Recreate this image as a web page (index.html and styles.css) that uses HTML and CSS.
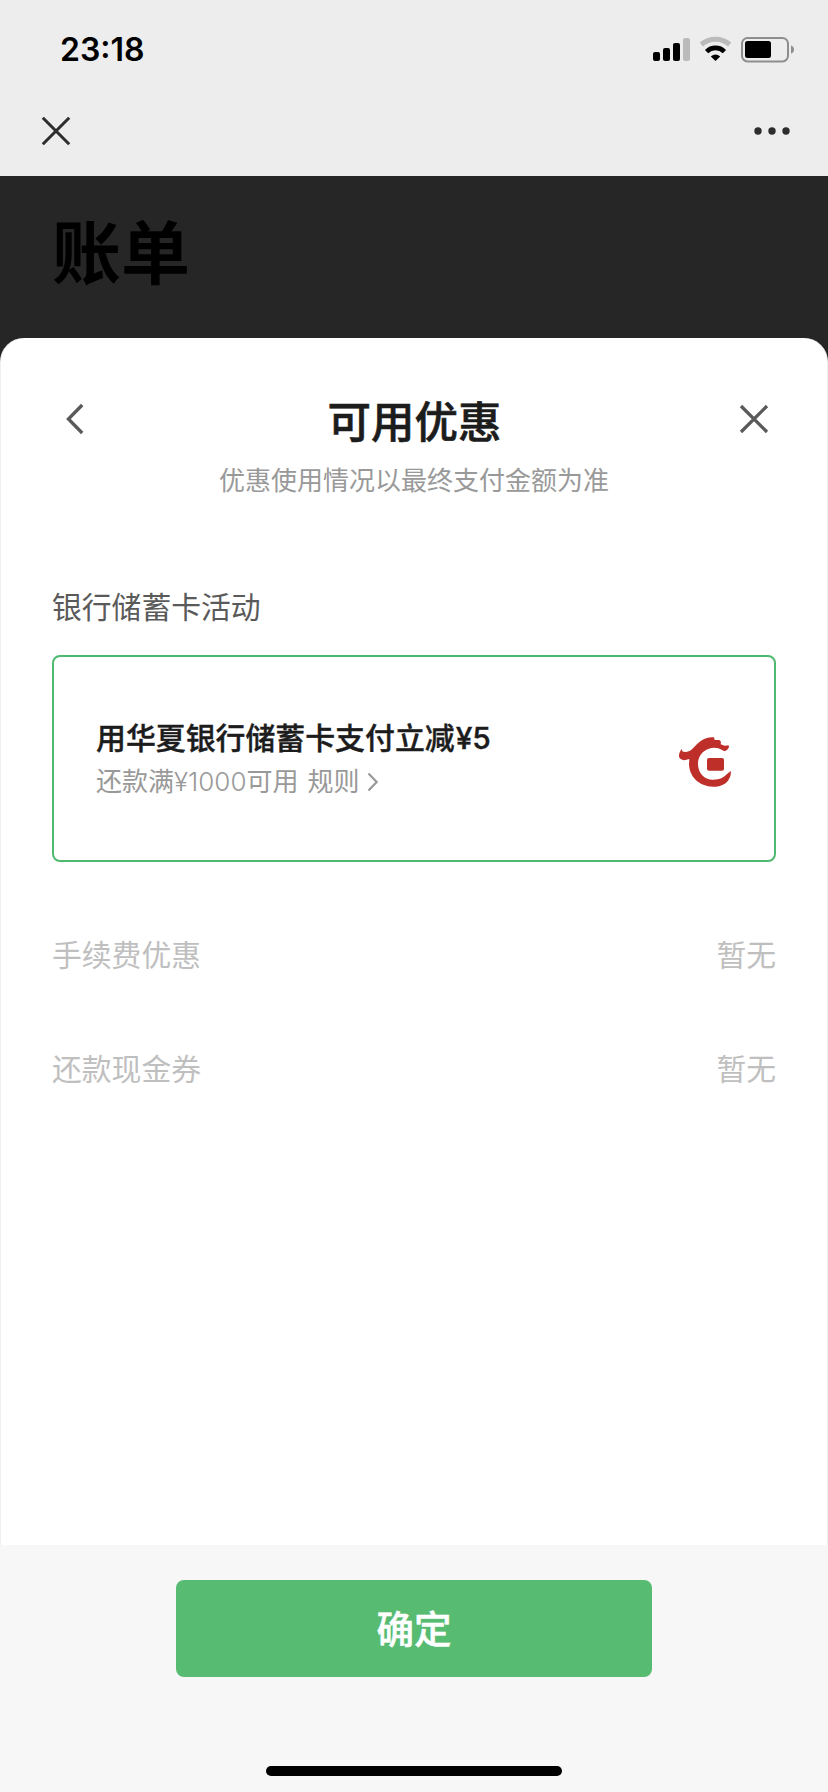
FILE: index.html
```
<!DOCTYPE html>
<html lang="zh-CN">
<head>
<meta charset="utf-8">
<title>可用优惠</title>
<link rel="stylesheet" href="styles.css">
</head>
<body>
<div class="screen">
  <header class="top">
    <div class="status">
      <span class="time">23:18</span>
      <svg class="status-icons" width="144" height="28" viewBox="0 0 144 28">
        <rect x="1" y="17" width="7" height="9" rx="2"/>
        <rect x="11" y="13" width="7" height="13" rx="2"/>
        <rect x="21" y="8" width="7" height="18" rx="2"/>
        <rect x="31" y="3" width="7" height="23" rx="2" fill="#bbb"/>
        <path d="M49.3 9.5A21.5 21.5 0 0 1 77.7 9.5" fill="none" stroke="#bbb" stroke-width="5"/>
        <path d="M54.6 16.6A12.5 12.5 0 0 1 72.4 16.6" fill="none" stroke="#000" stroke-width="4.6"/>
        <path d="M58.8 21.6Q63.5 17.6 68.2 21.6L63.5 26Z"/>
        <rect x="90" y="3" width="46" height="23.4" rx="5.5" fill="none" stroke="#8e8e8e" stroke-width="2"/>
        <rect x="93" y="6" width="26" height="17" rx="2.5"/>
        <path d="M139 10.5Q142 11.5 142 14.5Q142 17.5 139 18.5Z" fill="#8e8e8e"/>
      </svg>
    </div>
    <nav class="nav">
      <svg width="30" height="30" viewBox="0 0 30 30"><path d="M1.8 1.8L28.2 28.2M28.2 1.8L1.8 28.2" fill="none" stroke="#2d2d2d" stroke-width="3"/></svg>
      <svg width="36" height="8" viewBox="0 0 36 8" fill="#2d2d2d"><circle cx="4" cy="4" r="3.7"/><circle cx="18" cy="4" r="3.7"/><circle cx="32" cy="4" r="3.7"/></svg>
    </nav>
  </header>
  <section class="backdrop"><h1 class="page-title">账单</h1></section>
  <main class="sheet">
    <div class="sheet-head">
      <svg class="back" width="18" height="32" viewBox="0 0 18 32"><path d="M16.2 2L2.4 16L16.2 30" fill="none" stroke="#5a5a5a" stroke-width="3.3"/></svg>
      <h2 class="sheet-title">可用优惠</h2>
      <svg class="close" width="30" height="30" viewBox="0 0 30 30"><path d="M2 2L28 28M28 2L2 28" fill="none" stroke="#5a5a5a" stroke-width="3.3"/></svg>
    </div>
    <p class="hint">优惠使用情况以最终支付金额为准</p>
    <h3 class="group">银行储蓄卡活动</h3>
    <div class="card">
      <div class="card-text">
        <div class="card-title">用华夏银行储蓄卡支付立减<span class="amount">¥5</span></div>
        <div class="card-sub">还款满<span class="num">¥1000</span>可用<span class="rule">规则</span><svg class="more" width="12" height="20" viewBox="0 0 12 20"><path d="M1.5 1.5L9.7 10L1.5 18.5" fill="none" stroke="#999" stroke-width="2.2"/></svg></div>
      </div>
      <svg class="logo" width="54" height="52" viewBox="114 108 162 156" fill="#bf2f2a">
        <path d="M125 147L127 154Q136 158 148 153C160 148 166 135 181 124C194 114 207 111 222 112L224 120L238 120L243 125L242 133L254 137L266 136L267 142L261 150L254 154L246 150C235 143 220 141 207 146C185 153 174 171 174 191C174 219 193 239 219 239C241 239 253 230 262 221L272 213C274 225 270 233 264 242C254 254 239 260 219 260C178 260 148 231 147 193L148 177L136 180Q126 182 119 175C115 168 117 157 125 147Z"/>
        <rect x="201" y="174" width="51" height="38" rx="6"/>
      </svg>
    </div>
    <div class="row"><span>手续费优惠</span><span>暂无</span></div>
    <div class="row row-last"><span>还款现金券</span><span>暂无</span></div>
  </main>
  <footer class="foot">
    <button class="confirm">确定</button>
    <div class="home"></div>
  </footer>
</div>
</body>
</html>
```
FILE: styles.css
```
* { box-sizing: border-box; margin: 0; padding: 0; }
body { font-family: Inter, "Noto Sans CJK SC", sans-serif; background: #262626; }
svg { display: block; flex: none; }
.screen { width: 828px; height: 1792px; display: flex; flex-direction: column; background: #262626; }
.top { height: 176px; background: #ededed; flex: none; }
.status { height: 100px; padding: 35px 32px 0 60px; display: flex; justify-content: space-between; align-items: flex-start; }
.time { font-size: 32px; line-height: 30px; font-weight: 600; color: #000; }
.nav { padding: 16px 38px 0 41px; display: flex; justify-content: space-between; align-items: center; }
.backdrop { height: 162px; padding: 42px 52px 0; flex: none; }
.page-title { font-size: 69px; line-height: 72px; font-weight: 700; color: #000; }
.sheet { flex: 1; background: #fff; border: solid #f0f0f0; border-width: 0 1px; border-radius: 24px 24px 0 0; padding: 57px 51px 0; }
.sheet-head { display: grid; grid-template-columns: 1fr auto 1fr; align-items: center; height: 54px; padding: 0 7px 0 14px; }
.back, .close { margin-top: -6px; }
.close { justify-self: end; }
.sheet-title { position: relative; left: -3px; font-size: 43.5px; line-height: 54px; font-weight: 500; color: #1c1c1c; -webkit-text-stroke: .6px #1c1c1c; }
.hint { margin-top: 14px; font-size: 26px; line-height: 36px; font-weight: 400; color: #999; text-align: center; }
.group { margin-top: 88px; font-size: 29.8px; line-height: 40px; font-weight: 400; color: #5a5a5a; }
.card { margin-top: 28px; height: 207px; border: 2px solid #50b970; border-radius: 8px; padding: 3px 42px 0; display: flex; align-items: center; justify-content: space-between; }
.card-title { font-size: 29.9px; line-height: 44px; font-weight: 500; color: #1c1c1c; -webkit-text-stroke: .4px #1c1c1c; }
.card-sub { display: flex; align-items: center; font-size: 26px; line-height: 44px; font-weight: 400; color: #999; }
.amount { margin-left: 1px; }
.num { font-weight: 300; }
.rule { margin-left: 9px; }
.more { margin-left: 7px; }
.logo { margin-top: 3px; }
.row { margin-top: 73px; display: flex; justify-content: space-between; font-size: 29.8px; line-height: 40px; font-weight: 400; color: #bfbfbf; }
.row-last { margin-top: 74px; }
.foot { height: 247px; flex: none; background: #f7f7f7; padding-top: 35px; display: flex; flex-direction: column; align-items: center; }
.confirm { width: 476px; height: 97px; padding-top: 2px; border: 0; border-radius: 8px; background: #57bb72; color: #fff; font: 500 37.5px/95px Inter, "Noto Sans CJK SC", sans-serif; -webkit-text-stroke: .5px #fff; }
.home { margin-top: 89px; width: 296px; height: 10px; border-radius: 5px; background: #000; }
```
